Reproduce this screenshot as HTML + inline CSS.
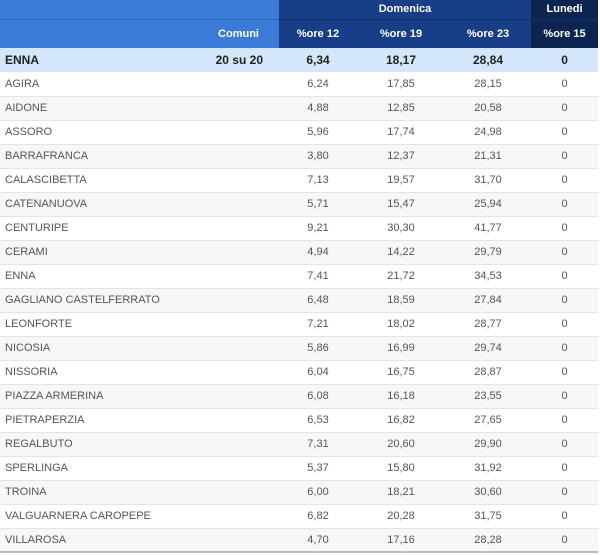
<!DOCTYPE html>
<html><head><meta charset="utf-8"><style>
*{margin:0;padding:0;box-sizing:border-box}
body{width:600px;height:555px;background:#fff;font-family:"Liberation Sans",sans-serif;overflow:hidden}
table{border-collapse:collapse;width:598px;table-layout:fixed}
td{height:24px;font-size:11px;color:#555;border-bottom:1px solid #e4e4e4;text-align:center}
td.n{text-align:left;padding-left:5px}
tr.alt td{background:#f7f7f7}
tr.top td{background:#d4e6fa;color:#222;font-weight:bold;font-size:12px;border-bottom:none}
.h1 td{height:19px;font-size:11px;font-weight:bold;color:#fff;border-bottom:1px solid #123068}
.h2 td{height:29px;font-size:11px;font-weight:bold;color:#fff;border-bottom:none}
.lb{background:#3a7bd8}.db{background:#173e86}.dd{background:#0c2450}
.h1 td.lb{border-bottom:1px solid #2e64b4}
</style></head><body>
<table>
<colgroup><col style="width:200px"><col style="width:79px"><col style="width:78px"><col style="width:88px"><col style="width:86px"><col style="width:67px"></colgroup>
<tr class="h1"><td class="lb" colspan="2"></td><td class="db" colspan="3">Domenica</td><td class="dd">Lunedi</td></tr>
<tr class="h2"><td class="lb"></td><td class="lb" style="text-align:right;padding-right:20px">Comuni</td><td class="db">%ore 12</td><td class="db">%ore 19</td><td class="db">%ore 23</td><td class="dd">%ore 15</td></tr>
<tr class="top"><td class="n">ENNA</td><td style="text-align:right;padding-right:16px">20 su 20</td><td>6,34</td><td>18,17</td><td>28,84</td><td>0</td></tr>
<tr><td class="n">AGIRA</td><td></td><td>6,24</td><td>17,85</td><td>28,15</td><td>0</td></tr>
<tr class="alt"><td class="n">AIDONE</td><td></td><td>4,88</td><td>12,85</td><td>20,58</td><td>0</td></tr>
<tr><td class="n">ASSORO</td><td></td><td>5,96</td><td>17,74</td><td>24,98</td><td>0</td></tr>
<tr class="alt"><td class="n">BARRAFRANCA</td><td></td><td>3,80</td><td>12,37</td><td>21,31</td><td>0</td></tr>
<tr><td class="n">CALASCIBETTA</td><td></td><td>7,13</td><td>19,57</td><td>31,70</td><td>0</td></tr>
<tr class="alt"><td class="n">CATENANUOVA</td><td></td><td>5,71</td><td>15,47</td><td>25,94</td><td>0</td></tr>
<tr><td class="n">CENTURIPE</td><td></td><td>9,21</td><td>30,30</td><td>41,77</td><td>0</td></tr>
<tr class="alt"><td class="n">CERAMI</td><td></td><td>4,94</td><td>14,22</td><td>29,79</td><td>0</td></tr>
<tr><td class="n">ENNA</td><td></td><td>7,41</td><td>21,72</td><td>34,53</td><td>0</td></tr>
<tr class="alt"><td class="n">GAGLIANO CASTELFERRATO</td><td></td><td>6,48</td><td>18,59</td><td>27,84</td><td>0</td></tr>
<tr><td class="n">LEONFORTE</td><td></td><td>7,21</td><td>18,02</td><td>28,77</td><td>0</td></tr>
<tr class="alt"><td class="n">NICOSIA</td><td></td><td>5,86</td><td>16,99</td><td>29,74</td><td>0</td></tr>
<tr><td class="n">NISSORIA</td><td></td><td>6,04</td><td>16,75</td><td>28,87</td><td>0</td></tr>
<tr class="alt"><td class="n">PIAZZA ARMERINA</td><td></td><td>6,08</td><td>16,18</td><td>23,55</td><td>0</td></tr>
<tr><td class="n">PIETRAPERZIA</td><td></td><td>6,53</td><td>16,82</td><td>27,65</td><td>0</td></tr>
<tr class="alt"><td class="n">REGALBUTO</td><td></td><td>7,31</td><td>20,60</td><td>29,90</td><td>0</td></tr>
<tr><td class="n">SPERLINGA</td><td></td><td>5,37</td><td>15,80</td><td>31,92</td><td>0</td></tr>
<tr class="alt"><td class="n">TROINA</td><td></td><td>6,00</td><td>18,21</td><td>30,60</td><td>0</td></tr>
<tr><td class="n">VALGUARNERA CAROPEPE</td><td></td><td>6,82</td><td>20,28</td><td>31,75</td><td>0</td></tr>
<tr class="alt" style="border-bottom:2px solid #bbb"><td class="n">VILLAROSA</td><td></td><td>4,70</td><td>17,16</td><td>28,28</td><td>0</td></tr>
</table>
</body></html>
